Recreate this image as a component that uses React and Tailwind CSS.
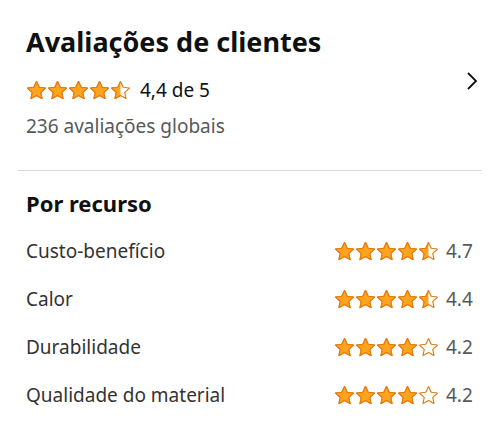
import React from "react";

const STAR = "M12 1.8l3.05 6.55 7.15.85-5.3 4.9 1.4 7.1L12 17.6l-6.3 3.6 1.4-7.1-5.3-4.9 7.15-.85z";

const Star = ({ fill, id }) => (
  <svg width="21" height="21" viewBox="0 0 24 24" className="shrink-0">
    <defs>
      <clipPath id={id}>
        <rect x="0" y="0" width={24 * fill} height="24" />
      </clipPath>
    </defs>
    <path d={STAR} fill="#fff" stroke="#e47911" strokeWidth="1.3" strokeLinejoin="round" />
    {fill > 0 && (
      <path
        d={STAR}
        fill="#ffa41c"
        stroke="#e47911"
        strokeWidth="1.3"
        strokeLinejoin="round"
        clipPath={`url(#${id})`}
      />
    )}
  </svg>
);

const Stars = ({ value, name }) => {
  const fills = [0, 1, 2, 3, 4].map((i) => {
    const f = value - i;
    if (f >= 0.75) return 1;
    if (f >= 0.25) return 0.5;
    return 0;
  });
  return (
    <div className="flex items-center">
      {fills.map((f, i) => (
        <Star key={i} fill={f} id={`${name}-${i}`} />
      ))}
    </div>
  );
};

const features = [
  { label: "Custo-benefício", value: 4.7 },
  { label: "Calor", value: 4.4 },
  { label: "Durabilidade", value: 4.2 },
  { label: "Qualidade do material", value: 4.2 },
];

export default function App() {
  return (
    <div
      className="w-[500px] h-[423px] bg-white overflow-hidden"
      style={{ fontFamily: "'Noto Sans', 'Open Sans', sans-serif" }}
    >
      {/* Summary */}
      <div className="pl-[26px] pr-[22px] pt-[25px] flex items-start justify-between">
        <div>
          <h2 className="text-[27px] font-bold text-[#0f1111] leading-[34px]">
            Avaliações de clientes
          </h2>
          <div className="flex items-center gap-[9px] mt-[19px] h-[24px]">
            <Stars value={4.4} name="top" />
            <span className="text-[19px] text-[#0f1111] leading-[24px]">4,4 de 5</span>
          </div>
          <p className="text-[19px] text-[#565959] leading-[26px] mt-[11px]">
            236 avaliações globais
          </p>
        </div>
        <svg width="12" height="20" viewBox="0 0 12 20" className="mt-[46px]">
          <path d="M2 2l8 8-8 8" fill="none" stroke="#0f1111" strokeWidth="1.8" />
        </svg>
      </div>

      {/* Divider */}
      <div className="mx-[18px] mt-[31px] h-px bg-[#d5d9d9]" />

      {/* Features */}
      <div className="pl-[26px] pr-[26px] pt-[18px]">
        <h3 className="text-[22px] font-bold text-[#0f1111] leading-[28px]">Por recurso</h3>
        <div className="mt-[10px] flex flex-col">
          {features.map((f, i) => (
            <div key={f.label} className="flex items-center justify-between h-[48px]">
              <span className="text-[19px] text-[#333] leading-[24px]">{f.label}</span>
              <div className="flex items-center gap-[7px]">
                <Stars value={f.value} name={`f${i}`} />
                <span className="text-[19px] text-[#565959] w-[28px]">{f.value}</span>
              </div>
            </div>
          ))}
        </div>
      </div>
    </div>
  );
}
